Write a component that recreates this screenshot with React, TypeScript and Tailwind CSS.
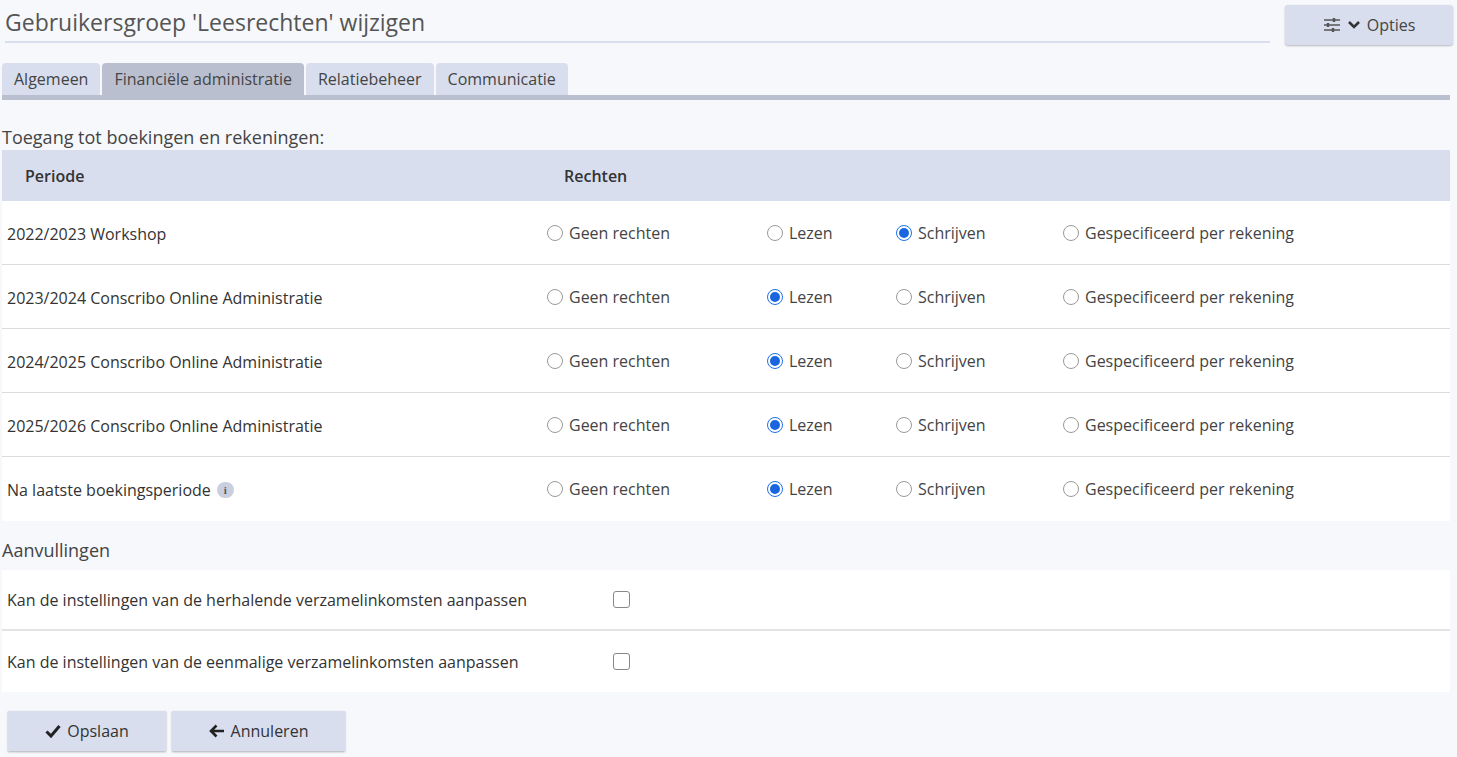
import React from "react";

const rows = [
  { label: "2022/2023 Workshop", sel: 2 },
  { label: "2023/2024 Conscribo Online Administratie", sel: 1 },
  { label: "2024/2025 Conscribo Online Administratie", sel: 1 },
  { label: "2025/2026 Conscribo Online Administratie", sel: 1 },
  { label: "Na laatste boekingsperiode", sel: 1, info: true },
];
const opts = ["Geen rechten", "Lezen", "Schrijven", "Gespecificeerd per rekening"];

function Radio({ on }: { on: boolean }) {
  return (
    <span className={`inline-flex h-[16px] w-[16px] items-center justify-center rounded-full border ${on ? "border-[#1a73e8]" : "border-[#9a9a9a]"} bg-white`}>
      {on && <span className="h-[10px] w-[10px] rounded-full bg-[#1a66e0]" />}
    </span>
  );
}

export default function App() {
  return (
    <div className="min-h-[757px] bg-[#f6f8fc] text-[#333] pr-[4px]" style={{ fontFamily: '"Open Sans", "Noto Sans", sans-serif' }}>
      <div className="flex items-start justify-between pl-[5px] pt-[5px]">
        <div className="w-[1265px] border-b-2 border-[#d8deee] pb-[2px] text-[23px] text-[#555] leading-[34px]">Gebruikersgroep 'Leesrechten' wijzigen</div>
        <button className="flex h-[40px] w-[168px] items-center justify-center gap-[6px] rounded-[3px] bg-[#d8deee] text-[16px] text-[#444] shadow-[0_1px_2px_rgba(0,0,0,0.25)]">
          <svg width="18" height="16" viewBox="0 0 18 16" fill="none" stroke="#555" strokeWidth="1.6">
            <path d="M1 3h16M1 8h16M1 13h16" />
            <path d="M11 1v4M5 6v4M10 11v4" strokeWidth="2.4" />
          </svg>
          <svg width="14" height="10" viewBox="0 0 14 10" fill="none" stroke="#333" strokeWidth="2.6"><path d="M2 2l5 5 5-5" /></svg>
          Opties
        </button>
      </div>
      <div className="mt-[18px] ml-[2px] flex gap-[2px] text-[16px] text-[#444]">
        <div className="rounded-t-[4px] bg-[#d8deee] px-[12px] leading-[32px]">Algemeen</div>
        <div className="rounded-t-[4px] bg-[#babfd0] px-[12px] leading-[32px]">Financiële administratie</div>
        <div className="rounded-t-[4px] bg-[#d8deee] px-[12px] leading-[32px]">Relatiebeheer</div>
        <div className="rounded-t-[4px] bg-[#d8deee] px-[12px] leading-[32px]">Communicatie</div>
      </div>
      <div className="ml-[2px] h-[5px] w-[1448px] bg-[#babfd0]" />
      <div className="ml-[2px] mt-[24px] text-[18px] text-[#444] leading-[26px]">Toegang tot boekingen en rekeningen:</div>
      <div className="ml-[2px] w-[1448px] text-[16px]">
        <div className="flex h-[51px] items-center bg-[#d8deee] font-semibold text-[#333]">
          <div className="w-[562px] pl-[23px]">Periode</div>
          <div>Rechten</div>
        </div>
        {rows.map((r, i) => (
          <div key={i} className={`grid h-[64px] grid-cols-[545px_220px_129px_167px_1fr] items-center bg-white ${i < rows.length - 1 ? "border-b border-[#dcdcdc]" : ""}`}>
            <div className="flex items-center gap-[6px] pl-[5px] pt-[2px]">
              {r.label}
              {r.info && <span className="inline-flex h-[16px] w-[17px] items-center justify-center rounded-full bg-[#c9cfdf] text-[11px] font-bold text-[#555]" style={{ fontFamily: '"Liberation Serif", serif' }}>i</span>}
            </div>
            {opts.map((o, j) => (
              <label key={j} className="flex items-center gap-[6px] text-[#444]">
                <Radio on={r.sel === j} />
                {o}
              </label>
            ))}
          </div>
        ))}
      </div>
      <div className="ml-[2px] mt-[16px] text-[18px] text-[#444] leading-[26px]">Aanvullingen</div>
      <div className="ml-[2px] mt-[7px] w-[1448px] text-[16px] text-[#333]">
        {["Kan de instellingen van de herhalende verzamelinkomsten aanpassen", "Kan de instellingen van de eenmalige verzamelinkomsten aanpassen"].map((t, i) => (
          <div key={i} className={`grid h-[61px] grid-cols-[611px_1fr] items-center bg-white ${i === 0 ? "border-b-2 border-[#e4e4e4]" : ""}`}>
            <div className="pl-[5px]">{t}</div>
            <span className="h-[17px] w-[17px] rounded-[3px] border border-[#888] bg-white" />
          </div>
        ))}
      </div>
      <div className="mt-[19px] ml-[8px] flex gap-[6px] text-[16px] text-[#333]">
        <button className="flex h-[40px] w-[158px] items-center justify-center gap-[6px] bg-[#d8deee] shadow-[0_1px_2px_rgba(0,0,0,0.3)]">
          <svg width="16" height="14" viewBox="0 0 16 14" fill="none" stroke="#222" strokeWidth="3"><path d="M1.5 7.5l4.5 4.5 8.5-10" /></svg>
          Opslaan
        </button>
        <button className="flex h-[40px] w-[173px] items-center justify-center gap-[6px] bg-[#d8deee] shadow-[0_1px_2px_rgba(0,0,0,0.3)]">
          <svg width="16" height="14" viewBox="0 0 16 14" fill="none" stroke="#222" strokeWidth="2.6"><path d="M15 7H2M7.5 1.5L2 7l5.5 5.5" /></svg>
          Annuleren
        </button>
      </div>
    </div>
  );
}
